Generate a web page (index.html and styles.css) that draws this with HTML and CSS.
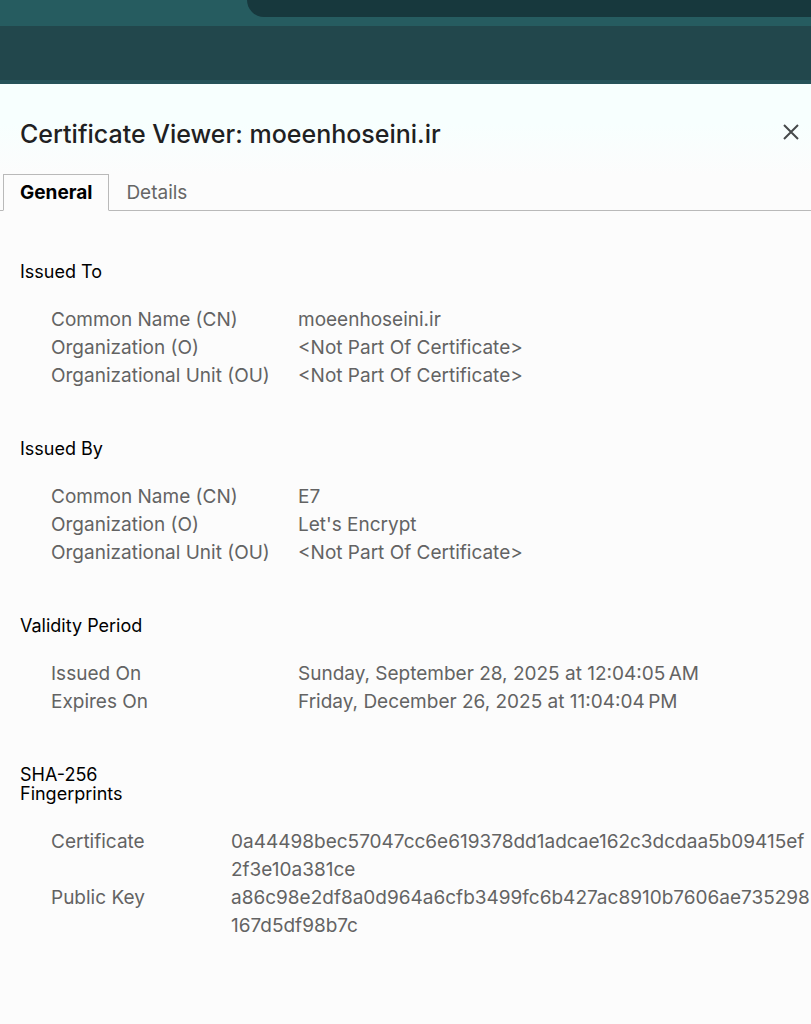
FILE: index.html
```html
<!DOCTYPE html>
<html lang="en">
<head>
<meta charset="utf-8">
<title>Certificate Viewer</title>
<link rel="stylesheet" href="styles.css">
</head>
<body>
<div class="chrome">
  <div class="tabstrip"><div class="tabstrip-shade"></div></div>
  <div class="toolbar"></div>
</div>
<main class="dialog">
  <header class="header">
    <h1 class="title">Certificate Viewer: moeenhoseini.ir</h1>
    <button class="close" type="button" aria-label="Close"><svg width="16" height="16" viewBox="0 0 16 16" fill="none" stroke="currentColor" stroke-width="2"><path d="M1 1l14 14M15 1L1 15"/></svg></button>
  </header>
  <div class="tabs" role="tablist">
    <button class="tab tab-active" type="button" role="tab" aria-selected="true">General</button>
    <button class="tab" type="button" role="tab" aria-selected="false">Details</button>
  </div>
  <div class="panel" role="tabpanel">
    <section class="section">
      <h2 class="heading">Issued To</h2>
      <dl class="fields">
        <dt>Common Name (CN)</dt><dd>moeenhoseini.ir</dd>
        <dt>Organization (O)</dt><dd>&lt;Not Part Of Certificate&gt;</dd>
        <dt>Organizational Unit (OU)</dt><dd>&lt;Not Part Of Certificate&gt;</dd>
      </dl>
    </section>
    <section class="section">
      <h2 class="heading">Issued By</h2>
      <dl class="fields">
        <dt>Common Name (CN)</dt><dd>E7</dd>
        <dt>Organization (O)</dt><dd>Let's Encrypt</dd>
        <dt>Organizational Unit (OU)</dt><dd>&lt;Not Part Of Certificate&gt;</dd>
      </dl>
    </section>
    <section class="section">
      <h2 class="heading">Validity Period</h2>
      <dl class="fields">
        <dt>Issued On</dt><dd>Sunday, September 28, 2025 at 12:04:05&#8239;AM</dd>
        <dt>Expires On</dt><dd>Friday, December 26, 2025 at 11:04:04&#8239;PM</dd>
      </dl>
    </section>
    <section class="section">
      <h2 class="heading">SHA-256<br>Fingerprints</h2>
      <dl class="fields fields-hash">
        <dt>Certificate</dt><dd>0a44498bec57047cc6e619378dd1adcae162c3dcdaa5b09415ef<wbr>2f3e10a381ce</dd>
        <dt>Public Key</dt><dd>a86c98e2df8a0d964a6cfb3499fc6b427ac8910b7606ae735298<wbr>167d5df98b7c</dd>
      </dl>
    </section>
  </div>
</main>
</body>
</html>
```
FILE: styles.css
```css
* { box-sizing: border-box; }
body {
  margin: 0;
  min-height: 100vh;
  background: #fcfcfc;
  color: #000;
  font-family: Inter, "Liberation Sans", sans-serif;
  font-size: 18px;
  line-height: 28px;
}
.tabstrip { height: 26px; background: #265c60; }
.tabstrip-shade {
  height: 17px;
  margin-left: 247px;
  background: #17383d;
  border-bottom-left-radius: 17px;
}
.toolbar {
  height: 58px;
  background: #22474c;
  border-bottom: 4px solid #265359;
}
.dialog { background: linear-gradient(#f7fffe 40px, #fcfcfc 90px); }
.header {
  display: flex;
  align-items: flex-start;
  justify-content: space-between;
  height: 90px;
  padding: 36px 12px 0 20px;
}
.title { margin: 0; font-size: 25px; font-weight: 500; color: #1f2122; }
.close {
  display: flex;
  margin-top: 4px;
  padding: 0;
  border: 0;
  background: none;
  color: #46494a;
}
.tabs {
  display: flex;
  height: 37px;
  padding-left: 3px;
  border-bottom: 1px solid #b9b9b9;
}
.tab {
  height: 37px;
  padding: 0 16px;
  border: 1px solid transparent;
  background: none;
  color: #666;
  font: inherit;
  font-size: 19px;
}
.tab-active {
  border-color: #b9b9b9;
  border-bottom-color: #fcfcfc;
  background: #fcfcfc;
  color: #000;
  font-weight: 700;
}
.panel { padding: 51px 0 20px 20px; }
.section { margin-bottom: 49px; }
.heading { margin: 0 0 25px; font-size: 18px; line-height: 19px; font-weight: 400; }
.fields {
  display: grid;
  grid-template-columns: 247px 1fr;
  margin: 0;
  padding-left: 31px;
  color: #636363;
  font-size: 19px;
}
.fields-hash { grid-template-columns: 180px 1fr; }
dd { margin: 0; min-width: 0; overflow-wrap: anywhere; }
```
